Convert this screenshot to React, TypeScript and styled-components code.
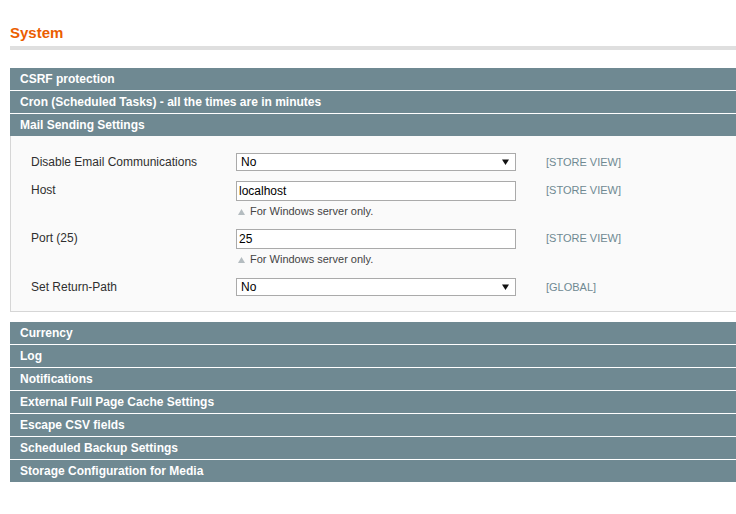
import styled, { createGlobalStyle } from 'styled-components';

const GlobalStyle = createGlobalStyle`
  html, body {
    margin: 0;
    padding: 0;
    background: #fff;
    overflow: hidden;
  }
  body {
    font-family: "Liberation Sans", Arial, sans-serif;
    font-size: 12px;
    color: #2f2f2f;
  }
`;

const Page = styled.div`
  padding: 24px 0 0 10px;
  width: 760px;
`;

const Title = styled.h3`
  margin: 0 0 18px;
  padding-bottom: 4px;
  border-bottom: 4px solid #dfdfdf;
  font-size: 15px;
  line-height: 18px;
  font-weight: bold;
  color: #eb5e00;
`;

const SectionHead = styled.div`
  height: 22px;
  line-height: 22px;
  padding: 0 10px;
  margin-bottom: 1px;
  background: #6f8992;
  color: #fff;
  font-size: 12px;
  font-weight: bold;
`;

const Fieldset = styled.div`
  margin: -1px 0 10px;
  padding: 17px 15px 15px;
  background: #fafafa;
  border: 1px solid #d6d6d6;
  border-top: none;
`;

const Row = styled.div<{ $gap: number }>`
  display: grid;
  grid-template-columns: 210px 280px 30px auto;
  margin-bottom: ${p => p.$gap}px;
  &:last-child {
    margin-bottom: 0;
  }
`;

const Label = styled.div`
  padding-left: 5px;
  line-height: 16px;
  padding-top: 1px;
  font-size: 12px;
  color: #2f2f2f;
`;

const Value = styled.div`
  display: flex;
  flex-direction: column;
`;

const Scope = styled.div`
  grid-column: 4;
  font-size: 11px;
  line-height: 16px;
  padding-top: 1px;
  color: #6f8992;
`;

const SelectBox = styled.div`
  box-sizing: border-box;
  height: 18px;
  display: flex;
  align-items: center;
  justify-content: space-between;
  padding: 0 6px 0 4px;
  background: #fff;
  border: 1px solid #aaa;
  font-size: 12px;
  color: #000;
`;

const TextInput = styled.input`
  box-sizing: border-box;
  width: 280px;
  height: 20px;
  margin: 0;
  padding: 0 2px;
  background: #fff;
  border: 1px solid #aaa;
  font-family: "Liberation Sans", Arial, sans-serif;
  font-size: 12px;
  color: #000;
  outline: none;
`;

const Note = styled.div`
  display: flex;
  align-items: center;
  gap: 5px;
  margin-top: 4px;
  padding-left: 2px;
  font-size: 11px;
  line-height: 13px;
  color: #444;
`;

function Arrow() {
  return (
    <svg width="7" height="6" viewBox="0 0 7 6">
      <path d="M0 0.5 H7 L3.5 6 Z" fill="#111" />
    </svg>
  );
}

function NoteArrow() {
  return (
    <svg width="7" height="6" viewBox="0 0 7 6">
      <path d="M3.5 0 L7 6 H0 Z" fill="#b4bcc0" />
    </svg>
  );
}

const TOP_SECTIONS = ['CSRF protection', 'Cron (Scheduled Tasks) - all the times are in minutes', 'Mail Sending Settings'];

const BOTTOM_SECTIONS = [
  'Currency',
  'Log',
  'Notifications',
  'External Full Page Cache Settings',
  'Escape CSV fields',
  'Scheduled Backup Settings',
  'Storage Configuration for Media',
];

export default function App() {
  return (
    <>
      <GlobalStyle />
      <Page>
        <Title>System</Title>
        {TOP_SECTIONS.map(s => (
          <SectionHead key={s}>{s}</SectionHead>
        ))}
        <Fieldset>
          <Row $gap={10}>
            <Label>Disable Email Communications</Label>
            <Value>
              <SelectBox>
                No
                <Arrow />
              </SelectBox>
            </Value>
            <Scope>[STORE VIEW]</Scope>
          </Row>
          <Row $gap={11}>
            <Label>Host</Label>
            <Value>
              <TextInput defaultValue="localhost" />
              <Note>
                <NoteArrow />
                For Windows server only.
              </Note>
            </Value>
            <Scope>[STORE VIEW]</Scope>
          </Row>
          <Row $gap={12}>
            <Label>Port (25)</Label>
            <Value>
              <TextInput defaultValue="25" />
              <Note>
                <NoteArrow />
                For Windows server only.
              </Note>
            </Value>
            <Scope>[STORE VIEW]</Scope>
          </Row>
          <Row $gap={0}>
            <Label>Set Return-Path</Label>
            <Value>
              <SelectBox>
                No
                <Arrow />
              </SelectBox>
            </Value>
            <Scope>[GLOBAL]</Scope>
          </Row>
        </Fieldset>
        {BOTTOM_SECTIONS.map(s => (
          <SectionHead key={s}>{s}</SectionHead>
        ))}
      </Page>
    </>
  );
}
